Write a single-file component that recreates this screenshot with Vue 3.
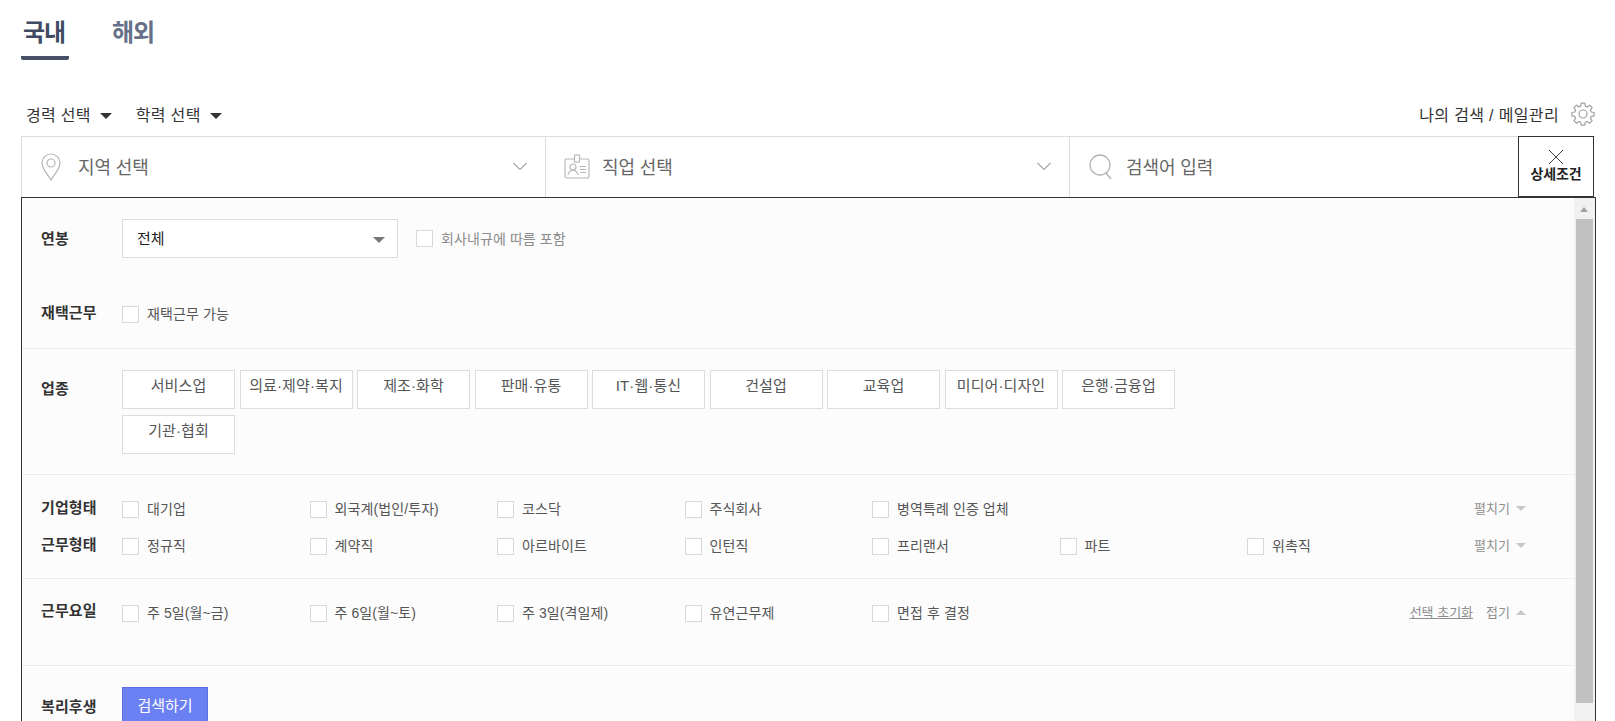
<script setup>
const industries = ['서비스업', '의료·제약·복지', '제조·화학', '판매·유통', 'IT·웹·통신', '건설업', '교육업', '미디어·디자인', '은행·금융업', '기관·협회']
const companyTypes = ['대기업', '외국계(법인/투자)', '코스닥', '주식회사', '병역특례 인증 업체']
const jobTypes = ['정규직', '계약직', '아르바이트', '인턴직', '프리랜서', '파트', '위촉직']
const workDays = ['주 5일(월~금)', '주 6일(월~토)', '주 3일(격일제)', '유연근무제', '면접 후 결정']
</script>

<template>
  <div class="page">
    <nav class="tabs">
      <a class="tab active">국내</a>
      <a class="tab">해외</a>
    </nav>

    <div class="filters">
      <div class="filter-left">
        <span class="drop">경력 선택<i class="caret"></i></span>
        <span class="drop">학력 선택<i class="caret"></i></span>
      </div>
      <div class="filter-right">
        <span>나의 검색 / 메일관리</span>
        <svg class="gear" width="24" height="24" viewBox="0 0 24 24" fill="none" stroke="#a0a0a0" stroke-width="1.2" stroke-linejoin="round">
          <path d="M10.2 1.2h3.600l.5 2.900 1.900.8 2.400-1.700 2.500 2.500-1.700 2.400.8 1.900 2.900.5v3.400l-2.900.5-.8 1.900 1.700 2.400-2.500 2.500-2.400-1.700-1.900.8-.5 2.900h-3.600l-.5-2.900-1.900-.8-2.400 1.700-2.500-2.500 1.700-2.400-.8-1.900-2.900-.5v-3.400l2.900-.5.8-1.900-1.700-2.400 2.500-2.500 2.400 1.700 1.900-.8z" />
          <circle cx="12" cy="12" r="4" />
        </svg>
      </div>
    </div>

    <div class="searchbar">
      <div class="cell cell-a">
        <svg class="ico" width="20" height="28" viewBox="0 0 20 28" fill="none" stroke="#b5b5b5" stroke-width="1.2">
          <path d="M10 1C5 1 1 5 1 10c0 6 6 12 9 17 3-5 9-11 9-17 0-5-4-9-9-9z" />
          <circle cx="10" cy="10" r="4" />
        </svg>
        <span class="cell-text">지역 선택</span>
        <svg class="chev" width="16" height="9" viewBox="0 0 16 9" fill="none" stroke="#a5a5a5" stroke-width="1.1"><path d="M1.500 1l6.500 6.500L14.500 1" /></svg>
      </div>
      <div class="cell cell-b">
        <svg class="ico" width="26" height="26" viewBox="0 0 26 26" fill="none" stroke="#b5b5b5" stroke-width="1.1">
          <path d="M10 5H2.5A1.5 1.5 0 0 0 1 6.500v16A1.500 1.500 0 0 0 2.500 24h21a1.500 1.500 0 0 0 1.500-1.500v-16A1.500 1.500 0 0 0 23.500 5H16" />
          <rect x="10.500" y="1" width="5" height="7" />
          <circle cx="9" cy="13" r="3" />
          <path d="M4 21c.5-3 2-4.500 5-4.500s4.500 1.500 5 4.500M16 12.500h6M16 15.500h6M16 18.500h6" />
        </svg>
        <span class="cell-text">직업 선택</span>
        <svg class="chev" width="16" height="9" viewBox="0 0 16 9" fill="none" stroke="#a5a5a5" stroke-width="1.1"><path d="M1.500 1l6.500 6.500L14.500 1" /></svg>
      </div>
      <div class="cell cell-c">
        <svg class="ico" width="24" height="26" viewBox="0 0 24 26" fill="none" stroke="#b5b5b5" stroke-width="1.3">
          <circle cx="11" cy="11" r="10" />
          <path d="M17 19l5 6" stroke-width="1.6" />
        </svg>
        <span class="cell-text">검색어 입력</span>
      </div>
      <button class="detail">
        <svg width="16" height="16" viewBox="0 0 16 16" fill="none" stroke="#444" stroke-width="1"><path d="M1 1l14 14M15 1L1 15" /></svg>
        <span>상세조건</span>
      </button>
    </div>

    <section class="panel">
      <div class="group group-first">
        <div class="row row-salary">
          <div class="label">연봉</div>
          <div class="select">
            <span class="select-text">전체</span>
            <i class="caret caret-gray"></i>
          </div>
          <label class="check check-inline muted"><i class="box"></i>회사내규에 따름 포함</label>
        </div>
        <div class="row row-remote">
          <div class="label">재택근무</div>
          <label class="check"><i class="box"></i>재택근무 가능</label>
        </div>
      </div>

      <div class="group group-ind">
        <div class="row">
          <div class="label label-ind">업종</div>
          <div class="chips">
            <a v-for="item in industries" :key="item" class="chip">{{ item }}</a>
          </div>
        </div>
      </div>

      <div class="group group-type">
        <div class="row row-opt row-company">
          <div class="label">기업형태</div>
          <div class="opts">
            <label v-for="item in companyTypes" :key="item" class="check opt"><i class="box"></i>{{ item }}</label>
          </div>
          <div class="toggle"><span>펼치기</span><i class="tri"></i></div>
        </div>
        <div class="row row-opt">
          <div class="label">근무형태</div>
          <div class="opts">
            <label v-for="item in jobTypes" :key="item" class="check opt"><i class="box"></i>{{ item }}</label>
          </div>
          <div class="toggle"><span>펼치기</span><i class="tri"></i></div>
        </div>
      </div>

      <div class="group group-days">
        <div class="row row-opt">
          <div class="label">근무요일</div>
          <div class="opts">
            <label v-for="item in workDays" :key="item" class="check opt"><i class="box"></i>{{ item }}</label>
          </div>
          <div class="toggle"><a class="reset">선택 초기화</a><span>접기</span><i class="tri tri-up"></i></div>
        </div>
      </div>

      <div class="group group-last">
        <div class="row">
          <div class="label label-welfare">복리후생</div>
          <button class="submit">검색하기</button>
        </div>
      </div>

      <div class="scrollbar" aria-hidden="true">
        <i class="sb-up"></i>
        <i class="sb-thumb"></i>
      </div>
    </section>
  </div>
</template>

<style scoped>
.page {
  height: 721px;
  overflow: hidden;
  box-sizing: border-box;
  padding-left: 21px;
  width: 1615px;
  background: #fff;
  color: #333;
  font-family: "Liberation Sans", "Noto Sans CJK KR", sans-serif;
  font-size: 14px;
}
.tabs {
  display: flex;
  gap: 43px;
  height: 60px;
}
.tab {
  height: 60px;
  box-sizing: border-box;
  padding-top: 15px;
  width: 48px;
  text-align: left;
  font-size: 24px;
  line-height: 36px;
  font-weight: 700;
  color: #667089;
  letter-spacing: -1px;
  white-space: nowrap;
}
.tab.active {
  color: #3f4a63;
  padding-left: 2px;
  border-bottom: 4px solid #475068;
  border-radius: 0 0 2px 2px;
}
.filters {
  display: flex;
  justify-content: space-between;
  align-items: center;
  height: 76px;
  width: 1574px;
  box-sizing: border-box;
  padding: 32px 0 0 5px;
  font-size: 16px;
  letter-spacing: .3px;
}
.filter-left { display: flex; gap: 24px; }
.drop { display: flex; align-items: center; }
.caret {
  display: inline-block;
  width: 0;
  height: 0;
  margin-left: 9px;
  margin-top: 3px;
  border-left: 6px solid transparent;
  border-right: 6px solid transparent;
  border-top: 6px solid #333;
}
.filter-right { display: flex; align-items: center; gap: 12px; letter-spacing: .35px; }
.searchbar {
  display: flex;
  height: 61px;
  width: 1574px;
  box-sizing: border-box;
  border-top: 1px solid #dcdcdc;
  border-left: 1px solid #dcdcdc;
  position: relative;
}
.cell {
  display: flex;
  align-items: center;
  box-sizing: border-box;
  height: 60px;
  border-right: 1px solid #dcdcdc;
  color: #666;
  font-size: 18px;
  position: relative;
}
.cell-text { padding-bottom: 2px; letter-spacing: -.1px; }
.cell-a { width: 524px; padding-left: 19px; }
.cell-b { width: 524px; padding-left: 18px; }
.cell-c { flex: 1; padding-left: 19px; border-right: 0; }
.cell-a .cell-text { margin-left: 17px; }
.cell-b .cell-text { margin-left: 12px; }
.cell-c .cell-text { margin-left: 13px; }
.chev { position: absolute; right: 17px; top: 25px; }
.detail {
  width: 76px;
  height: 61px;
  margin-top: -1px;
  margin-right: 1px;
  box-sizing: border-box;
  border: 1px solid #333;
  background: #fff;
  padding: 12px 0 0;
  display: flex;
  flex-direction: column;
  align-items: center;
  font-family: inherit;
  font-size: 14px;
  font-weight: 700;
  line-height: 18px;
  color: #222;
  letter-spacing: -.1px;
}
.panel {
  position: relative;
  width: 1575px;
  box-sizing: border-box;
  border: 1px solid #333;
  background: #fcfcfc;
  min-height: 540px;
}
.group {
  width: 1553px;
  box-sizing: border-box;
  padding-left: 19px;
  border-bottom: 1px solid #ececec;
}
.group-first { height: 151px; padding-top: 21px; }
.group-ind { height: 126px; padding-top: 21px; }
.group-type { height: 104px; padding-top: 24px; }
.group-days { height: 87px; padding-top: 24px; }
.group-last { border-bottom: 0; padding-top: 21px; }
.row { display: flex; align-items: flex-start; }
.label {
  width: 81px;
  flex: none;
  font-size: 15px;
  font-weight: 700;
  color: #333;
  line-height: 20px;
  letter-spacing: .1px;
}
.row-salary { align-items: center; height: 39px; }
.row-remote { margin-top: 46px; align-items: center; height: 20px; }
.row-remote .label { margin-bottom: 2px; }
.label-ind { padding-top: 9px; }
.label-welfare { padding-top: 10px; }
.select {
  width: 276px;
  height: 39px;
  box-sizing: border-box;
  border: 1px solid #dcdcdc;
  background: #fff;
  display: flex;
  align-items: center;
  justify-content: space-between;
  padding: 0 12px 0 14px;
  font-size: 15px;
  color: #222;
}
.select-text { padding-bottom: 3px; }
.caret-gray { border-top-color: #777; margin: 2px 0 0; }
.check {
  display: flex;
  align-items: center;
  font-size: 14px;
  line-height: 18px;
  color: #555;
  white-space: nowrap;
  letter-spacing: .1px;
}
.check-inline { margin-left: 18px; }
.muted { color: #8a8a8a; }
.box {
  width: 17px;
  height: 17px;
  box-sizing: border-box;
  flex: none;
  margin-right: 8px;
  border: 1px solid #d8d8d8;
  background: #fff;
}
.chips {
  display: flex;
  flex-wrap: wrap;
  gap: 6px 4.500px;
  width: 1100px;
}
.chip {
  width: 113px;
  height: 39px;
  box-sizing: border-box;
  border: 1px solid #dcdcdc;
  background: #fff;
  text-align: center;
  font-size: 15px;
  line-height: 30px;
  color: #555;
  letter-spacing: .1px;
  white-space: nowrap;
}
.row-opt { align-items: center; height: 20px; }
.row-opt .label { margin-bottom: 5px; }
.group-type .row-opt .label { margin-bottom: 3px; }
.row-company { margin-bottom: 17px; }
.opts { display: flex; flex: 1; min-width: 0; }
.opt { width: 187.500px; flex: none; }
.toggle {
  display: flex;
  flex: none;
  align-items: center;
  font-size: 13px;
  color: #8e8e8e;
  padding-right: 49px;
  white-space: nowrap;
  padding-bottom: 3px;
}
.reset {
  text-decoration: underline;
  margin-right: 13px;
}
.tri {
  width: 0;
  height: 0;
  margin-left: 6px;
  margin-top: 2px;
  border-left: 5px solid transparent;
  border-right: 5px solid transparent;
  border-top: 5px solid #c8c8c8;
}
.tri-up {
  border-top: 0;
  border-bottom: 5px solid #c8c8c8;
}
.submit {
  width: 86px;
  height: 40px;
  box-sizing: border-box;
  border: 1px solid #5b70e0;
  background: #6b80f2;
  color: #fff;
  font-family: inherit;
  font-size: 15px;
  padding: 0 0 6px;
}
.scrollbar {
  position: absolute;
  top: 0;
  right: 0;
  bottom: 0;
  width: 21px;
  background: #f1f1f1;
}
.sb-up {
  position: absolute;
  left: 6px;
  top: 9px;
  width: 0;
  height: 0;
  border-left: 4px solid transparent;
  border-right: 4px solid transparent;
  border-bottom: 5px solid #a3a3a3;
}
.sb-thumb {
  position: absolute;
  left: 2px;
  top: 21px;
  width: 17px;
  height: 484px;
  background: #c1c1c1;
}
</style>

<style>
html, body { margin: 0; overflow: hidden; background: #fff; }
</style>
